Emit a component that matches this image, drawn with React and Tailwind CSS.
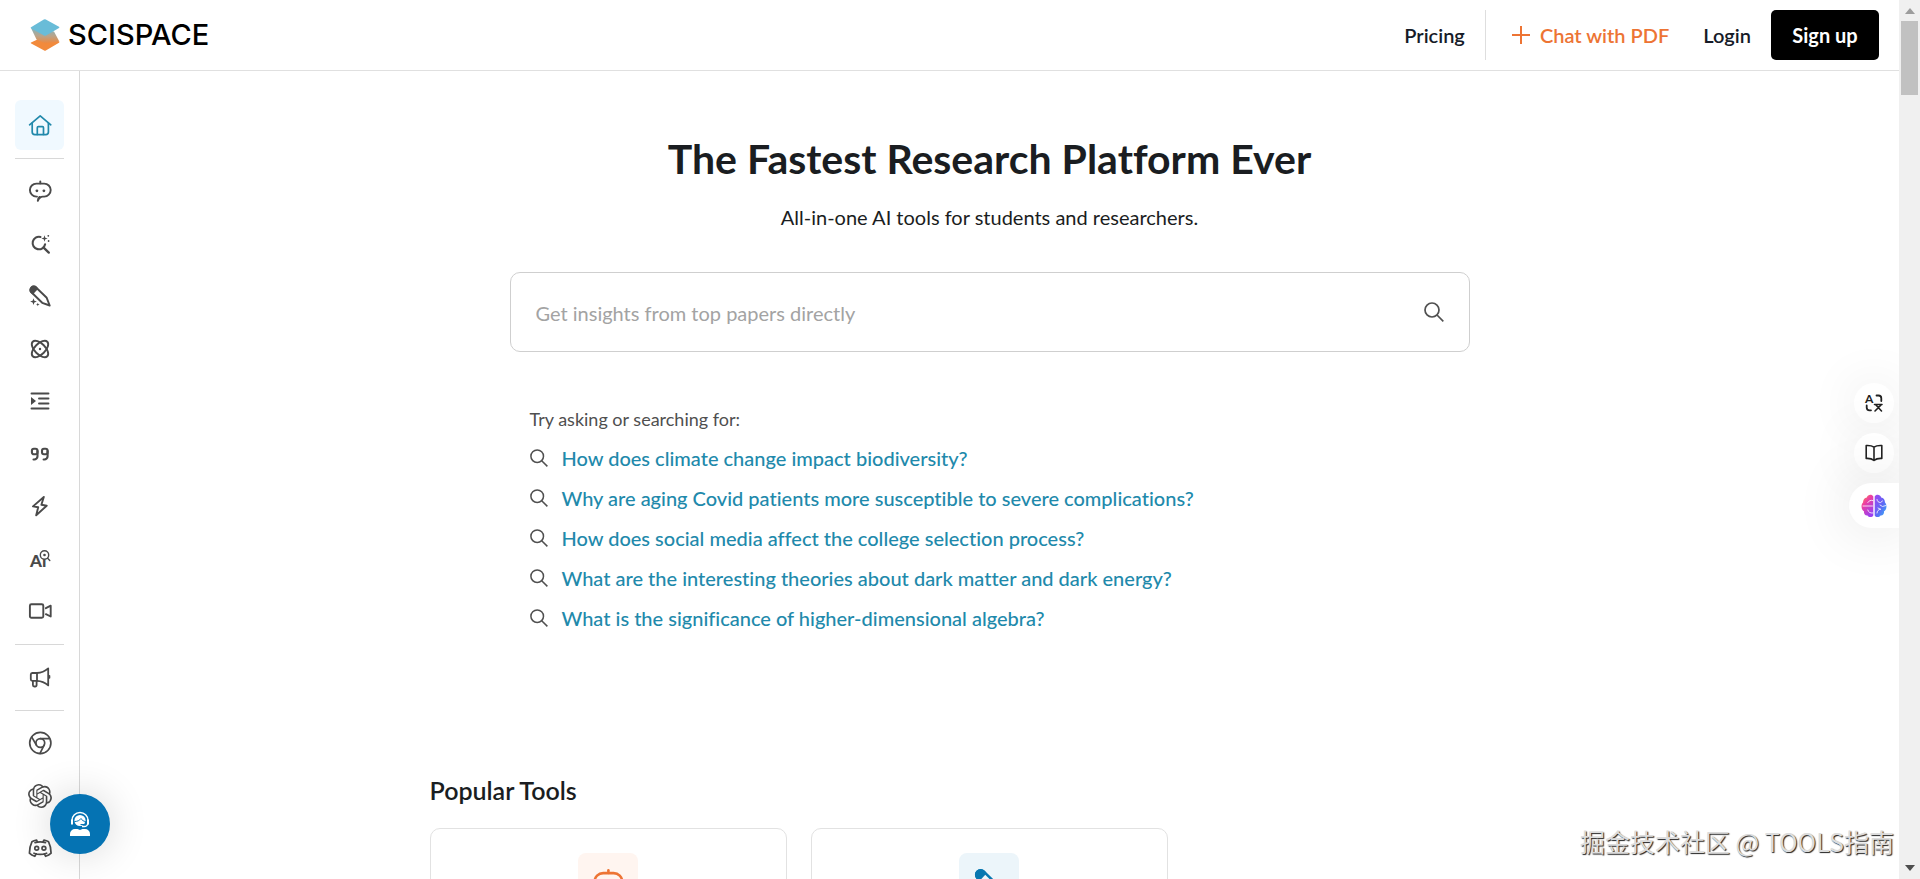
import { clsx } from 'clsx';
import { SiOpenai } from 'react-icons/si';

function Icon({ className, strokeWidth = 1.9, children }) {
  return (
    <svg
      viewBox="0 0 24 24"
      className={clsx('w-6 h-6', className)}
      fill="none"
      stroke="currentColor"
      strokeWidth={strokeWidth}
      strokeLinecap="round"
      strokeLinejoin="round"
      aria-hidden="true"
    >
      {children}
    </svg>
  );
}

const HomeIcon = () => (
  <Icon strokeWidth={1.7}>
    <path d="M1.6 11.8 12.2 2.8l10.6 9" />
    <path d="M4.2 10v9a2.6 2.6 0 0 0 2.6 2.6h11a2.6 2.6 0 0 0 2.6-2.6v-9" />
    <path d="M9.3 21.5v-6.8a1 1 0 0 1 1-1h4.2a1 1 0 0 1 1 1v6.8" />
  </Icon>
);

const BotIcon = ({ className }) => (
  <Icon className={className}>
    <path d="M12.3 2.4v2" />
    <path d="M9 17.6h-.6a6.5 6.5 0 0 1 0-13h7.8a6.5 6.5 0 0 1 0 13h-1.4c-2.4 0-3.8 1.6-5 4.2.1-1.8.6-3 1.6-3.900" />
    <circle cx="8.9" cy="11.8" r="1.4" fill="currentColor" stroke="none" />
    <circle cx="15.9" cy="11.8" r="1.4" fill="currentColor" stroke="none" />
  </Icon>
);

const SearchSparkIcon = () => (
  <Icon strokeWidth={2.1}>
    <path d="M12.5 4.9a6.3 6.3 0 1 0 4.6 7.4" />
    <path d="m15.6 15.6 5.2 5" strokeWidth="2.3" />
    <path d="m16.5 3.3.8 2.4 2.4.8-2.4.8-.8 2.4-.8-2.4-2.4-.8 2.4-.8z" fill="currentColor" stroke="none" />
    <circle cx="20.3" cy="3.8" r=".9" fill="currentColor" stroke="none" />
    <circle cx="20.6" cy="9" r=".9" fill="currentColor" stroke="none" />
  </Icon>
);

const PenIcon = ({ className }) => (
  <Icon className={className}>
    <path d="M3.4 8.300a3.3 3.3 0 0 1 4.700-4.800l10.600 10.300 3 7.700-7.500-2.700z" />
    <path d="M3.4 8.300a3.3 3.3 0 0 1 4.700-4.800L9 4.600 4.600 9.400z" fill="currentColor" />
    <path d="m5.500 14.200.9 2.500 2.500.9-2.500.9-.9 2.500-.9-2.500-2.500-.9 2.500-.9z" fill="currentColor" stroke="none" />
    <path d="m9.800 18.700.5 1.300 1.300.5-1.300.5-.5 1.300-.5-1.300-1.300-.5 1.300-.5z" fill="currentColor" stroke="none" />
  </Icon>
);

const AtomIcon = () => (
  <Icon>
    <ellipse cx="12" cy="12" rx="10.3" ry="5.3" transform="rotate(45 12 12)" />
    <ellipse cx="12" cy="12" rx="10.3" ry="5.3" transform="rotate(-45 12 12)" />
    <circle cx="12" cy="12" r="1.2" fill="currentColor" stroke="none" />
  </Icon>
);

const IndentIcon = () => (
  <Icon>
    <path d="M3.5 4.5h17M11 9.5h9.5M11 14.500h9.5M3.5 19.5h17" />
    <path d="M3 8v8l5-4z" fill="currentColor" stroke="none" />
  </Icon>
);

const QuoteIcon = () => (
  <Icon strokeWidth={2.1}>
    <rect x="3.9" y="6.7" width="5.6" height="5.6" rx="2" />
    <path d="M9.5 9v5.3a3.2 3.2 0 0 1-3.2 3.2h-.8" />
    <rect x="14" y="6.7" width="5.6" height="5.6" rx="2" />
    <path d="M19.6 9v5.3a3.2 3.2 0 0 1-3.2 3.2h-.8" />
  </Icon>
);

const BoltIcon = () => (
  <Icon>
    <path d="M15.8 3 5 12.400l5.200.8L8.200 21.300 18.700 11.700l-5.300-.9z" />
  </Icon>
);

const AiIcon = () => (
  <Icon strokeWidth={1.4}>
    <text x="2" y="20" fontSize="17" fontWeight="900" fontFamily="Lato, sans-serif" fill="currentColor" stroke="none">
      Aı
    </text>
    <circle cx="16.5" cy="8" r="4.2" fill="#fff" />
    <circle cx="16.5" cy="8" r="1.3" fill="currentColor" stroke="none" />
    <path d="m19.6 11.2 2.2 2.2" />
  </Icon>
);

const VideoIcon = () => (
  <Icon>
    <rect x="1.9" y="5.2" width="13.4" height="13.6" rx="1.5" />
    <path d="M17.9 9.2 22.7 6.700v10.800l-4.800-2.300" />
  </Icon>
);

const MegaphoneIcon = () => (
  <Icon strokeWidth={1.8}>
    <path d="M9 8H4.300A1.600 1.600 0 0 0 2.800 9.600v4.600a1.600 1.600 0 0 0 1.500 1.600H9z" />
    <path d="M9 8c4.600-.2 8-1.800 11.200-4.600v17C17 17.600 13.600 16 9 15.800" />
    <path d="M4.900 15.800v4.300a1.400 1.400 0 0 0 1.400 1.400h.9A1.400 1.400 0 0 0 8.600 20v-4.200" />
    <path d="M21.400 10.800v2" />
  </Icon>
);

const ChromeIcon = () => (
  <Icon strokeWidth={1.7}>
    <circle cx="12.3" cy="12" r="10.6" />
    <circle cx="12.3" cy="12" r="4.4" />
    <path d="M12.3 7.600h9.100M8.500 14.200 3.900 6.400M16.100 14.200 12 22.400" />
  </Icon>
);

const DiscordIcon = () => (
  <Icon strokeWidth={1.7}>
    <path d="m15 6 .9-1.800c1.700.3 3.300.8 4.700 1.600 1.700 3.400 2.500 7.200 2.500 11.400-1.500 1.500-3.300 2.500-5.400 3.100l-1.400-2.500" />
    <path d="m9.400 6-.8-1.800c-1.700.3-3.300.8-4.700 1.600C2.200 9.200 1.400 13 1.400 17.200c1.500 1.500 3.300 2.500 5.400 3.100l1.400-2.500" />
    <path d="M7 6.600c3.500-1 7-1 10.500 0M6 17.200c4.200 1.700 8.400 1.700 12.600 0" />
    <circle cx="8.7" cy="12.3" r="1.9" />
    <circle cx="15.9" cy="12.3" r="1.9" />
  </Icon>
);

const SearchIcon = ({ className }) => (
  <svg viewBox="0 0 20 20" className={className} fill="none" stroke="currentColor" strokeWidth="1.7" aria-hidden="true">
    <circle cx="8" cy="8" r="7" />
    <path d="m13 13 6.3 6.3" />
  </svg>
);

const tools = [
  { label: 'Chat with PDF', icon: <BotIcon /> },
  { label: 'Literature Review', icon: <SearchSparkIcon /> },
  { label: 'AI Writer', icon: <PenIcon /> },
  { label: 'Find Topics', icon: <AtomIcon /> },
  { label: 'Paraphraser', icon: <IndentIcon /> },
  { label: 'Citation Generator', icon: <QuoteIcon /> },
  { label: 'Extract Data', icon: <BoltIcon /> },
  { label: 'AI Detector', icon: <AiIcon /> },
  { label: 'Paper to Video', icon: <VideoIcon /> },
];

const community = [
  { label: 'Chrome Extension', icon: <ChromeIcon /> },
  { label: 'Use on ChatGPT', icon: <SiOpenai className="w-6 h-6" /> },
  { label: 'Discord', icon: <DiscordIcon /> },
];

const questions = [
  'How does climate change impact biodiversity?',
  'Why are aging Covid patients more susceptible to severe complications?',
  'How does social media affect the college selection process?',
  'What are the interesting theories about dark matter and dark energy?',
  'What is the significance of higher-dimensional algebra?',
];

function SideLink({ label, active, children }) {
  return (
    <a
      href="#"
      aria-label={label}
      className={clsx(
        'w-[49px] h-[50px] shrink-0 rounded-md flex items-center justify-center',
        active ? 'bg-[#f0f9ff] text-[#2189ab]' : 'text-[#4a4a4a]'
      )}
    >
      {children}
    </a>
  );
}

const SideDivider = () => <hr className="w-[49px] shrink-0 mt-2 mb-[7px] border-t border-[#d8d8d8]" />;

function Logo() {
  return (
    <a href="#" className="flex items-center gap-2">
      <svg viewBox="0 0 30 32" className="w-[30px] h-8" aria-hidden="true">
        <defs>
          <linearGradient id="band" x1="0" y1="0" x2="0" y2="1">
            <stop offset="0" stopColor="#7fb4c0" />
            <stop offset=".5" stopColor="#b8a48c" />
            <stop offset="1" stopColor="#f0883c" />
          </linearGradient>
        </defs>
        <path d="M1 23.500 15 17l14 5.500q.9.600 0 1.200L15.800 31.500q-.8.500-1.600 0L1.200 24.500q-.9-.5-.2-1z" fill="#f28a3c" />
        <path d="M1 9 24 12.500 29.300 22.500 15 24.500 6.500 20.500z" fill="url(#band)" />
        <path d="M1 8.200 13.800.6q1-.5 2 0L29 7.800q.9.600 0 1.200L16 16.400q-1 .5-2 0L1 9.200q-.8-.5 0-1z" fill="#69bcd8" />
      </svg>
      <span className="font-[Inter,sans-serif] font-medium text-[29px] leading-8 text-black">SCISPACE</span>
    </a>
  );
}

function Header() {
  return (
    <header className="h-[71px] shrink-0 border-b border-[#e0e0e0] pl-[30px] pr-5 flex items-center justify-between">
      <Logo />
      <nav className="flex items-center text-xl font-semibold text-[#161b28]">
        <a href="#" className="pr-5">Pricing</a>
        <a href="#" className="h-[50px] border-l border-[#dedede] pl-[26px] flex items-center gap-[10px] text-[#ed7434]">
          <svg viewBox="0 0 18 18" className="w-[18px] h-[18px]" stroke="currentColor" strokeWidth="2" aria-hidden="true">
            <path d="M9 0v18M0 9h18" />
          </svg>
          Chat with PDF
        </a>
        <a href="#" className="pl-[34px] pr-5">Login</a>
        <button type="button" className="h-[50px] min-w-[108px] px-5 rounded-[5px] bg-black text-white font-bold">
          Sign up
        </button>
      </nav>
    </header>
  );
}

function Sidebar() {
  return (
    <aside className="w-20 shrink-0 border-r border-[#d8d8d8] pt-[29px] flex flex-col items-center">
      <SideLink label="Home" active><HomeIcon /></SideLink>
      <SideDivider />
      <div className="h-[470px] shrink-0 flex flex-col justify-between">
        {tools.map((t) => <SideLink key={t.label} label={t.label}>{t.icon}</SideLink>)}
      </div>
      <SideDivider />
      <SideLink label="Announcements"><MegaphoneIcon /></SideLink>
      <SideDivider />
      <div className="h-[155px] shrink-0 flex flex-col justify-between">
        {community.map((t) => <SideLink key={t.label} label={t.label}>{t.icon}</SideLink>)}
      </div>
    </aside>
  );
}

function ToolCard({ tint, children }) {
  return (
    <div className="h-[260px] border border-[#e2e2e2] rounded-[10px] pt-6 flex justify-center">
      <div className={clsx('w-[60px] h-[60px] rounded-lg flex items-center justify-center', tint)}>{children}</div>
    </div>
  );
}

function FloatingTools() {
  return (
    <div className="absolute right-0 top-[383px] flex flex-col items-end gap-[10px]">
      <button type="button" aria-label="Translate" className="w-10 h-10 mr-[5px] rounded-full bg-white shadow-[0_0_50px_rgba(0,0,0,0.10)] flex items-center justify-center text-[#222]">
        <svg viewBox="0 0 24 24" className="w-6 h-6" fill="none" stroke="currentColor" strokeWidth="1.8" strokeLinecap="round" aria-hidden="true">
          <text x="3" y="12" fontSize="12" fontWeight="700" fontFamily="Lato, sans-serif" fill="currentColor" stroke="none">A</text>
          <path d="M14.5 4.500h2a2.800 2.800 0 0 1 2.800 2.800v2.700M4.700 14.500v2a2.800 2.800 0 0 0 2.800 2.800h1.500" />
          <path d="m13.500 13.500 6 6.500M19.500 13.500l-6.500 6.500M12.500 13.500h7.500" strokeWidth="1.6" />
        </svg>
      </button>
      <button type="button" aria-label="Reader" className="w-10 h-10 mr-[5px] rounded-full bg-white shadow-[0_0_50px_rgba(0,0,0,0.10)] flex items-center justify-center text-[#222]">
        <svg viewBox="0 0 18 18" className="w-[18px] h-[18px]" fill="none" stroke="currentColor" strokeWidth="1.6" strokeLinejoin="round" aria-hidden="true">
          <path d="M9 3.200C7 1.800 4.500 1.400 1.200 1.600v12.800c3.300-.2 5.800.4 7.800 2 2-1.600 4.500-2.200 7.800-2V1.600C13.500 1.400 11 1.800 9 3.200zM9 3.200v13.200" />
        </svg>
      </button>
      <button type="button" aria-label="Assistant" className="w-[50px] h-[45px] rounded-l-full bg-white shadow-[0_0_60px_rgba(0,0,0,0.14)] flex items-center justify-center">
        <svg viewBox="0 0 26 24" className="w-[26px] h-6" aria-hidden="true">
          <defs>
            <linearGradient id="brainLeft" x1="0" y1="0" x2=".6" y2="1">
              <stop offset="0" stopColor="#ff9a3c" />
              <stop offset=".4" stopColor="#ee3fa0" />
              <stop offset="1" stopColor="#9b3ff0" />
            </linearGradient>
            <linearGradient id="brainRight" x1="0" y1="0" x2="1" y2="1">
              <stop offset="0" stopColor="#a044f2" />
              <stop offset=".55" stopColor="#5d6af5" />
              <stop offset="1" stopColor="#32b8f5" />
            </linearGradient>
          </defs>
          <path d="M12.300 2.500v19c-1 2-4.500 2.300-5.800 0C4 21.800 2.600 19.500 3 17.300 0 15.500-.2 10.600 2 8.500 2 5.600 3.500 3.800 5.800 3.400 6.800.3 11 .1 12.300 2.500z" fill="url(#brainLeft)" />
          <path d="M13.700 2.500v19c1 2 4.500 2.300 5.800 0 2.500.3 3.900-2 3.500-4.200 3-1.800 3.200-6.700 1-8.800 0-2.900-1.500-4.700-3.800-5.100-1-3.100-5.200-3.300-6.500-.9z" fill="url(#brainRight)" />
          <path d="M11.800 6.500c-2-.6-4 .2-5 2M2 12h9.500M11.800 19c-2.500.3-4.500-.8-5-3M16 5.500c.3 2 1.500 3 3.500 3l2-1.500M19 11l2.500 1.500L25 11.500M16 19c.2-2 1.200-3.500 3.500-3.800M17 14l2.500 1.200" fill="none" stroke="#fff" strokeOpacity=".8" strokeWidth="1" strokeLinecap="round" />
        </svg>
      </button>
    </div>
  );
}

function ScrollRail() {
  return (
    <div className="w-[21px] shrink-0 bg-[#f0f0f0] py-2 flex flex-col items-center justify-between" aria-hidden="true">
      <div className="flex flex-col items-center gap-[7px]">
        <svg viewBox="0 0 10 6" className="w-[10px] h-[6px]" fill="#9d9d9d"><path d="M0 6 5 0l5 6z" /></svg>
        <div className="w-[17px] h-[74px] bg-[#c1c1c1]" />
      </div>
      <svg viewBox="0 0 10 6" className="w-[10px] h-[6px]" fill="#4d4d4d"><path d="M0 0h10L5 6z" /></svg>
    </div>
  );
}

export default function App() {
  return (
    <div className="h-screen overflow-hidden flex bg-white font-[Lato,'Noto_Sans_CJK_SC',sans-serif] [font-variant-ligatures:none]">
      <div className="relative flex-1 min-w-0 flex flex-col overflow-hidden">
        <Header />
        <div className="flex-1 min-h-0 flex">
          <Sidebar />
          <main className="flex-1 min-w-0 px-8 pt-16">
            <section className="max-w-[960px] mx-auto">
              <h1 className="text-center text-[41px] leading-[48px] font-bold text-[#1a1d21]">
                The Fastest Research Platform Ever
              </h1>
              <p className="mt-[19px] text-center text-xl leading-[30px] text-[#1a1d21]">
                All-in-one AI tools for students and researchers.
              </p>
              <form className="mt-10 h-20 border border-[#cfcfcf] rounded-[10px] px-[25px] flex items-center">
                <input
                  type="text"
                  aria-label="Search papers"
                  placeholder="Get insights from top papers directly"
                  className="flex-1 h-full pt-[2px] text-xl outline-none placeholder:text-[#a3a3a3]"
                />
                <button type="button" aria-label="Search" className="text-[#505050]">
                  <SearchIcon className="w-5 h-5" />
                </button>
              </form>

              <div className="mt-[54px] px-5">
                <p className="text-lg leading-[26px] text-[#4f4f4f]">Try asking or searching for:</p>
                <ul className="mt-[6px]">
                  {questions.map((q) => (
                    <li key={q}>
                      <a href="#" className="h-10 flex items-center gap-[14px] text-xl font-medium text-[#2189ab]">
                        <SearchIcon className="w-[18px] h-[18px] text-[#505050]" />
                        {q}
                      </a>
                    </li>
                  ))}
                </ul>
              </div>
            </section>

            <section className="max-w-[1120px] mx-auto mt-[136px]">
              <h2 className="text-[25px] leading-8 font-semibold text-[#1a1d21]">Popular Tools</h2>
              <div className="mt-[22px] grid grid-cols-3 gap-6">
                <ToolCard tint="bg-[#fff5f0] text-[#ed7434]"><BotIcon className="w-8 h-8" /></ToolCard>
                <ToolCard tint="bg-[#ecf5fa] text-[#0877b0]"><PenIcon className="w-8 h-8" /></ToolCard>
              </div>
            </section>
          </main>
        </div>

        <FloatingTools />

        <button
          type="button"
          aria-label="Support"
          className="absolute left-[50px] bottom-[25px] w-[60px] h-[60px] rounded-full bg-[#0573b3] shadow-[0_0_40px_rgba(0,0,0,0.16)] flex items-center justify-center"
        >
          <svg viewBox="0 0 24 28" className="w-6 h-7" aria-hidden="true">
            <circle cx="12" cy="10.5" r="5.6" fill="#fff" />
            <path d="M4 10.500a8 8 0 0 1 16 0v2.500a4 4 0 0 1-4 3.500h-2" fill="none" stroke="#fff" strokeWidth="1.5" />
            <path d="M6.500 11.500c3 0 5-1 6.500-3 1 1.800 2.500 2.800 4.500 3l-.5 3h-4.500" fill="none" stroke="#0573b3" strokeWidth="1" />
            <path d="M3 9.500h2v5H3zM19 9.500h2v5h-2z" fill="#fff" />
            <path d="M2 26v-2a5 5 0 0 1 5-5h2.500l2.500 1 2.500-1H17a5 5 0 0 1 5 5v2z" fill="#fff" />
          </svg>
        </button>

        <p className="absolute right-[5px] bottom-5 text-[25px] leading-9 text-[#dcdcdc] font-['Noto_Sans_CJK_SC',sans-serif] [text-shadow:1px_1px_1px_#222]">
          掘金技术社区 @ TOOLS指南
        </p>
      </div>
      <ScrollRail />
    </div>
  );
}
